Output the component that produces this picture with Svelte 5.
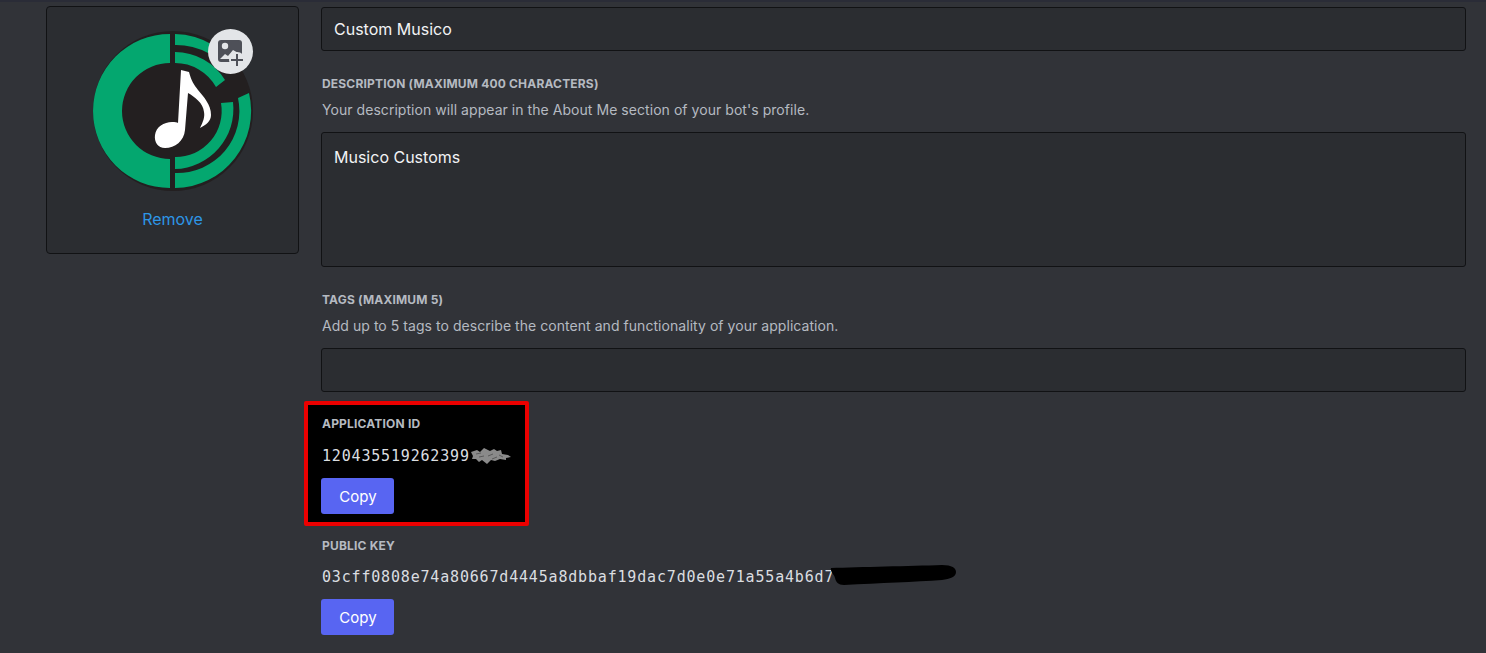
<script>
  const sections = [
    { key: 'public', label: 'PUBLIC KEY', value: '03cff0808e74a80667d4445a8dbbaf19dac7d0e0e71a55a4b6d7' }
  ];
</script>

<div class="page">
  <div class="avatar-card">
    <div class="avatar">
      <svg class="logo" viewBox="90 29 164 164" width="164" height="164" aria-hidden="true">
        <circle cx="172" cy="111" r="80" fill="#231f20" />
        <path d="M169 34 A77 77 0 0 0 169 188 V159 A48 48 0 0 1 169 63 Z" fill="#04a76f" />
        <path d="M174 34 A77 77 0 0 1 212 45 L207 53 A68 68 0 0 0 174 45 Z" fill="#04a76f" />
        <path d="M174 52 A59 59 0 0 1 224 80 L215 87 A47 47 0 0 0 174 63 Z" fill="#04a76f" />
        <path d="M248 93 A77 77 0 0 1 174 188 V173 A62 62 0 0 0 237 98 Z" fill="#04a76f" />
        <path d="M232 102 A60 60 0 0 1 174 169 V157 A46 46 0 0 0 220 103 Z" fill="#04a76f" />
        <path d="M180 70 L188 72 C190 80 193 85 197 90 C203 97 210 105 210 115 C210 121 205 125 199 128 C202 122 204 117 203 112 C202 103 194 97 187 93 L184 130 C183 141 174 148 164 148 C157 148 153 142 154 135 C155 127 163 122 171 122 C174 122 176 122 177 123 Z" fill="#fff" />
      </svg>
      <span class="badge">
        <svg viewBox="216 38 30 30" width="30" height="30" aria-hidden="true">
          <path d="M222 41 H240 A3 3 0 0 1 243 44 V63 H222 A3 3 0 0 1 219 60 V44 A3 3 0 0 1 222 41 Z" fill="#4e5058" />
          <circle cx="226" cy="47" r="3.2" fill="#e3e5e8" />
          <path d="M221 60 L226 55 L229 57 L234 51 L241 55 L233 60 Z" fill="#e3e5e8" />
          <circle cx="238" cy="61" r="8" fill="#e3e5e8" />
          <path d="M238 55 V67 M232 61 H244" stroke="#4e5058" stroke-width="2" fill="none" />
        </svg>
      </span>
    </div>
    <span class="remove">Remove</span>
  </div>

  <div class="form">
    <div class="input">Custom Musico</div>

    <h5>DESCRIPTION (MAXIMUM 400 CHARACTERS)</h5>
    <p>Your description will appear in the About Me section of your bot's profile.</p>
    <div class="input area">Musico Customs</div>

    <h5>TAGS (MAXIMUM 5)</h5>
    <p>Add up to 5 tags to describe the content and functionality of your application.</p>
    <div class="input"></div>

    <section class="highlight">
      <h5>APPLICATION ID</h5>
      <div class="mono">
        <span class="secret">120435519262399
          <svg class="smudge" viewBox="0 0 42 18" width="42" height="18" aria-hidden="true">
            <path d="M1 5 L7 3 L10 5 L14 1 L20 4 L24 2 L27 4 L31 3 L32 7 L38 8 L41 10 L36 11 L36 13 L30 12 L25 14 L21 13 L17 17 L12 13 L9 15 L6 12 L2 12 L3 9 Z" fill="#8a8a8a" />
            <path d="M6 7 L11 6 M9 10 L14 9 M18 9 L23 7 M22 12 L27 10 M29 8 L33 10" stroke="#5a5a5a" stroke-width="1" />
          </svg>
        </span>
      </div>
      <button type="button">Copy</button>
    </section>

    {#each sections as s (s.key)}
      <section class="field">
        <h5>{s.label}</h5>
        <div class="mono">
          <span class="secret">{s.value}
            <svg class="scribble" viewBox="0 0 126 21" width="126" height="21" aria-hidden="true">
              <path d="M1 3 C30 2 80 1 112 0 C122 0 126 3 126 7 C126 12 120 14 112 15 C85 17 50 18 14 20 C8 20 6 17 5 13 C4 9 0 7 1 3 Z" fill="#000" />
            </svg>
          </span>
        </div>
        <button type="button">Copy</button>
      </section>
    {/each}
  </div>
</div>

<style>
  :global(body) {
    background: #313338;
    font-family: Inter, "Noto Sans", sans-serif;
  }

  .page {
    height: 653px;
    box-sizing: border-box;
    overflow: hidden;
    display: flex;
    align-items: flex-start;
    gap: 22px;
    padding: 4px 20px 0 46px;
    border-top: 2px solid #2a2c37;
    background: #313338;
  }

  .avatar-card {
    width: 253px;
    height: 248px;
    flex: none;
    box-sizing: border-box;
    border: 1px solid #111214;
    border-radius: 4px;
    background: #2b2d31;
    display: flex;
    flex-direction: column;
    align-items: center;
    padding-top: 22px;
  }

  .avatar {
    position: relative;
    width: 164px;
    height: 164px;
  }

  .logo {
    display: block;
    filter: blur(0.4px);
  }

  .badge {
    position: absolute;
    top: 0;
    left: 117px;
    width: 45px;
    height: 45px;
    border-radius: 50%;
    background: #e3e5e8;
    display: flex;
    align-items: center;
    justify-content: center;
  }

  .remove {
    margin-top: 16px;
    font-size: 16px;
    line-height: 20px;
    color: #2d96e6;
  }

  .form {
    flex: 1;
    min-width: 0;
    padding-top: 1px;
  }

  .input {
    box-sizing: border-box;
    height: 44px;
    padding: 11px 12px;
    border: 1px solid #111214;
    border-radius: 3px;
    background: #2b2d31;
    color: #f2f3f5;
    font-size: 16px;
    line-height: 20px;
  }

  .input.area {
    height: 135px;
    padding-top: 14px;
  }

  h5 {
    margin: 25px 0 0;
    padding-left: 1px;
    font-size: 12px;
    line-height: 16px;
    font-weight: 700;
    letter-spacing: 0.18px;
    color: #b5bac1;
  }

  p {
    margin: 8px 0 13px;
    padding-left: 1px;
    font-size: 14px;
    line-height: 19px;
    letter-spacing: 0.05px;
    color: #b5bac1;
  }

  .highlight {
    width: 225px;
    box-sizing: border-box;
    margin: 9px 0 0 -17px;
    padding: 11px 13px 8px 13px;
    border: 4px solid #ec0000;
    border-radius: 2px;
    background: #000;
  }

  .highlight h5 {
    margin-top: 0;
  }

  .field {
    margin-top: 12px;
  }

  .field h5 {
    margin-top: 0;
  }

  .field .mono {
    margin-top: 13px;
  }

  .mono {
    margin: 14px 0 12px;
    padding-left: 1px;
    font-family: "DejaVu Sans Mono", "Liberation Mono", monospace;
    font-size: 15px;
    line-height: 20px;
    letter-spacing: 0.82px;
    color: #dbdee1;
    white-space: nowrap;
  }

  .secret {
    position: relative;
    display: inline-block;
  }

  .smudge {
    position: absolute;
    top: 1px;
    left: 148px;
  }

  .scribble {
    position: absolute;
    top: -2px;
    left: 508px;
  }

  button {
    display: block;
    width: 73px;
    height: 36px;
    padding: 2px 0 0 1px;
    border: none;
    border-radius: 3px;
    background: #5865f2;
    color: #fff;
    font-family: inherit;
    font-size: 15px;
    line-height: 16px;
  }
</style>
